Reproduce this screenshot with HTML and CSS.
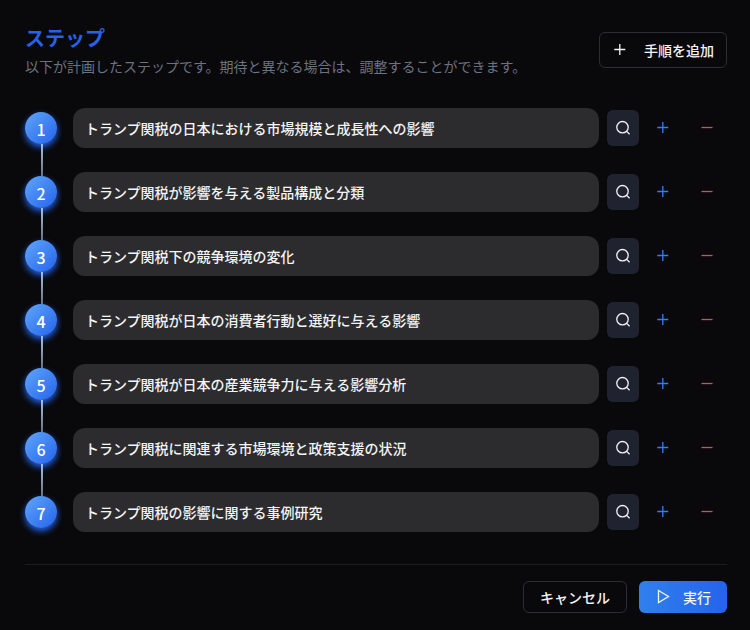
FILE: index.html
```html
<!DOCTYPE html>
<html lang="ja">
<head>
<meta charset="utf-8">
<meta name="viewport" content="width=device-width, initial-scale=1">
<title>ステップ</title>
<link rel="stylesheet" href="styles.css">
</head>
<body>
<svg width="0" height="0" class="sprite" aria-hidden="true">
  <symbol id="plus" viewBox="0 0 16 16"><path d="M7.8 2v11M2.3 7.5h11"/></symbol>
  <symbol id="minus" viewBox="0 0 16 16"><path d="M2.5 7.5h11"/></symbol>
  <symbol id="search" viewBox="0 0 16 16"><circle cx="7.5" cy="7.2" r="5.7"/><path d="M11.4 11.1l3.2 3.1"/></symbol>
  <symbol id="play" viewBox="0 0 16 16"><path d="M3.5 1.5l10 6-10 6z"/></symbol>
</svg>
<main class="panel">
  <header class="header">
    <div class="heading">
      <h1 class="title">ステップ</h1>
      <p class="subtitle">以下が計画したステップです。期待と異なる場合は、調整することができます。</p>
    </div>
    <button type="button" class="btn btn-add"><svg class="icon"><use href="#plus"/></svg>手順を追加</button>
  </header>
  <ol class="steps">
    <li class="step">
      <span class="badge">1</span>
      <input class="field" type="text" aria-label="ステップ 1" value="トランプ関税の日本における市場規模と成長性への影響">
      <button type="button" class="tool tool-search" aria-label="検索"><svg class="icon"><use href="#search"/></svg></button>
      <button type="button" class="tool tool-plus" aria-label="追加"><svg class="icon"><use href="#plus"/></svg></button>
      <button type="button" class="tool tool-minus" aria-label="削除"><svg class="icon"><use href="#minus"/></svg></button>
    </li>
    <li class="step">
      <span class="badge">2</span>
      <input class="field" type="text" aria-label="ステップ 2" value="トランプ関税が影響を与える製品構成と分類">
      <button type="button" class="tool tool-search" aria-label="検索"><svg class="icon"><use href="#search"/></svg></button>
      <button type="button" class="tool tool-plus" aria-label="追加"><svg class="icon"><use href="#plus"/></svg></button>
      <button type="button" class="tool tool-minus" aria-label="削除"><svg class="icon"><use href="#minus"/></svg></button>
    </li>
    <li class="step">
      <span class="badge">3</span>
      <input class="field" type="text" aria-label="ステップ 3" value="トランプ関税下の競争環境の変化">
      <button type="button" class="tool tool-search" aria-label="検索"><svg class="icon"><use href="#search"/></svg></button>
      <button type="button" class="tool tool-plus" aria-label="追加"><svg class="icon"><use href="#plus"/></svg></button>
      <button type="button" class="tool tool-minus" aria-label="削除"><svg class="icon"><use href="#minus"/></svg></button>
    </li>
    <li class="step">
      <span class="badge">4</span>
      <input class="field" type="text" aria-label="ステップ 4" value="トランプ関税が日本の消費者行動と選好に与える影響">
      <button type="button" class="tool tool-search" aria-label="検索"><svg class="icon"><use href="#search"/></svg></button>
      <button type="button" class="tool tool-plus" aria-label="追加"><svg class="icon"><use href="#plus"/></svg></button>
      <button type="button" class="tool tool-minus" aria-label="削除"><svg class="icon"><use href="#minus"/></svg></button>
    </li>
    <li class="step">
      <span class="badge">5</span>
      <input class="field" type="text" aria-label="ステップ 5" value="トランプ関税が日本の産業競争力に与える影響分析">
      <button type="button" class="tool tool-search" aria-label="検索"><svg class="icon"><use href="#search"/></svg></button>
      <button type="button" class="tool tool-plus" aria-label="追加"><svg class="icon"><use href="#plus"/></svg></button>
      <button type="button" class="tool tool-minus" aria-label="削除"><svg class="icon"><use href="#minus"/></svg></button>
    </li>
    <li class="step">
      <span class="badge">6</span>
      <input class="field" type="text" aria-label="ステップ 6" value="トランプ関税に関連する市場環境と政策支援の状況">
      <button type="button" class="tool tool-search" aria-label="検索"><svg class="icon"><use href="#search"/></svg></button>
      <button type="button" class="tool tool-plus" aria-label="追加"><svg class="icon"><use href="#plus"/></svg></button>
      <button type="button" class="tool tool-minus" aria-label="削除"><svg class="icon"><use href="#minus"/></svg></button>
    </li>
    <li class="step">
      <span class="badge">7</span>
      <input class="field" type="text" aria-label="ステップ 7" value="トランプ関税の影響に関する事例研究">
      <button type="button" class="tool tool-search" aria-label="検索"><svg class="icon"><use href="#search"/></svg></button>
      <button type="button" class="tool tool-plus" aria-label="追加"><svg class="icon"><use href="#plus"/></svg></button>
      <button type="button" class="tool tool-minus" aria-label="削除"><svg class="icon"><use href="#minus"/></svg></button>
    </li>
  </ol>
  <footer class="footer">
    <button type="button" class="btn">キャンセル</button>
    <button type="button" class="btn btn-run"><svg class="icon"><use href="#play"/></svg>実行</button>
  </footer>
</main>
</body>
</html>
```
FILE: styles.css
```css
* {
  box-sizing: border-box;
}

body {
  margin: 0;
  background: #09090b;
  color: #f4f4f5;
  font-family: "Noto Sans CJK JP", sans-serif;
  font-size: 14px;
  line-height: 20px;
}

button,
input {
  font: inherit;
  color: inherit;
}

button {
  display: flex;
  align-items: center;
  justify-content: center;
  padding: 0;
  border: 0;
  background: none;
  cursor: pointer;
}

.sprite {
  position: absolute;
}

.icon {
  width: 16px;
  height: 16px;
  flex: none;
  fill: none;
  stroke: currentColor;
  stroke-width: 1.3;
}

.panel {
  padding: 24px 23px 17px 25px;
}

.header {
  display: flex;
  align-items: center;
  justify-content: space-between;
  margin-bottom: 32px;
}

.title {
  margin: 0 0 4px;
  color: #2563eb;
  font-size: 20px;
  font-weight: 700;
  line-height: 28px;
}

.subtitle {
  margin: 0;
  color: #6b7280;
}

.btn {
  height: 32px;
  padding: 0 16px;
  border: 1px solid #2d2d38;
  border-radius: 6px;
  font-weight: 500;
}

.btn-add {
  height: 36px;
  padding: 0 12px;
  gap: 16px;
}

.steps {
  display: flex;
  flex-direction: column;
  gap: 24px;
  margin: 0;
  padding: 0;
  list-style: none;
}

.step {
  position: relative;
  display: flex;
  align-items: center;
}

.step:not(:last-child)::before {
  content: "";
  position: absolute;
  left: 16px;
  top: 36px;
  width: 2px;
  height: 32px;
  background: linear-gradient(#a3bfef, #6b7280);
  z-index: 1;
}

.badge {
  width: 32px;
  height: 32px;
  margin-right: 16px;
  border-radius: 50%;
  background: linear-gradient(135deg, #60a5fa, #2563eb);
  box-shadow: 0 3px 6px #2563eb;
  color: #fff;
  font-size: 16px;
  font-weight: 500;
  line-height: 34px;
  text-align: center;
}

.field {
  flex: 1;
  min-width: 0;
  height: 40px;
  margin-right: 8px;
  padding: 0 12px;
  border: 0;
  border-radius: 12px;
  background: #2c2c2e;
  font-weight: 500;
}

.tool {
  width: 32px;
  height: 36px;
  border-radius: 6px;
}

.tool-search {
  margin-right: 8px;
  background: #1f2330;
}

.tool-plus {
  margin-right: 12px;
  color: #2f80ed;
}

.tool-minus {
  margin-right: 4px;
  color: #ef4444;
}

.footer {
  display: flex;
  justify-content: flex-end;
  gap: 12px;
  margin-top: 32px;
  padding-top: 16px;
  border-top: 1px solid #1c1c1f;
}

.btn-run {
  gap: 12px;
  border: 0;
  background: linear-gradient(90deg, #2f80ed, #2563eb);
}
```
